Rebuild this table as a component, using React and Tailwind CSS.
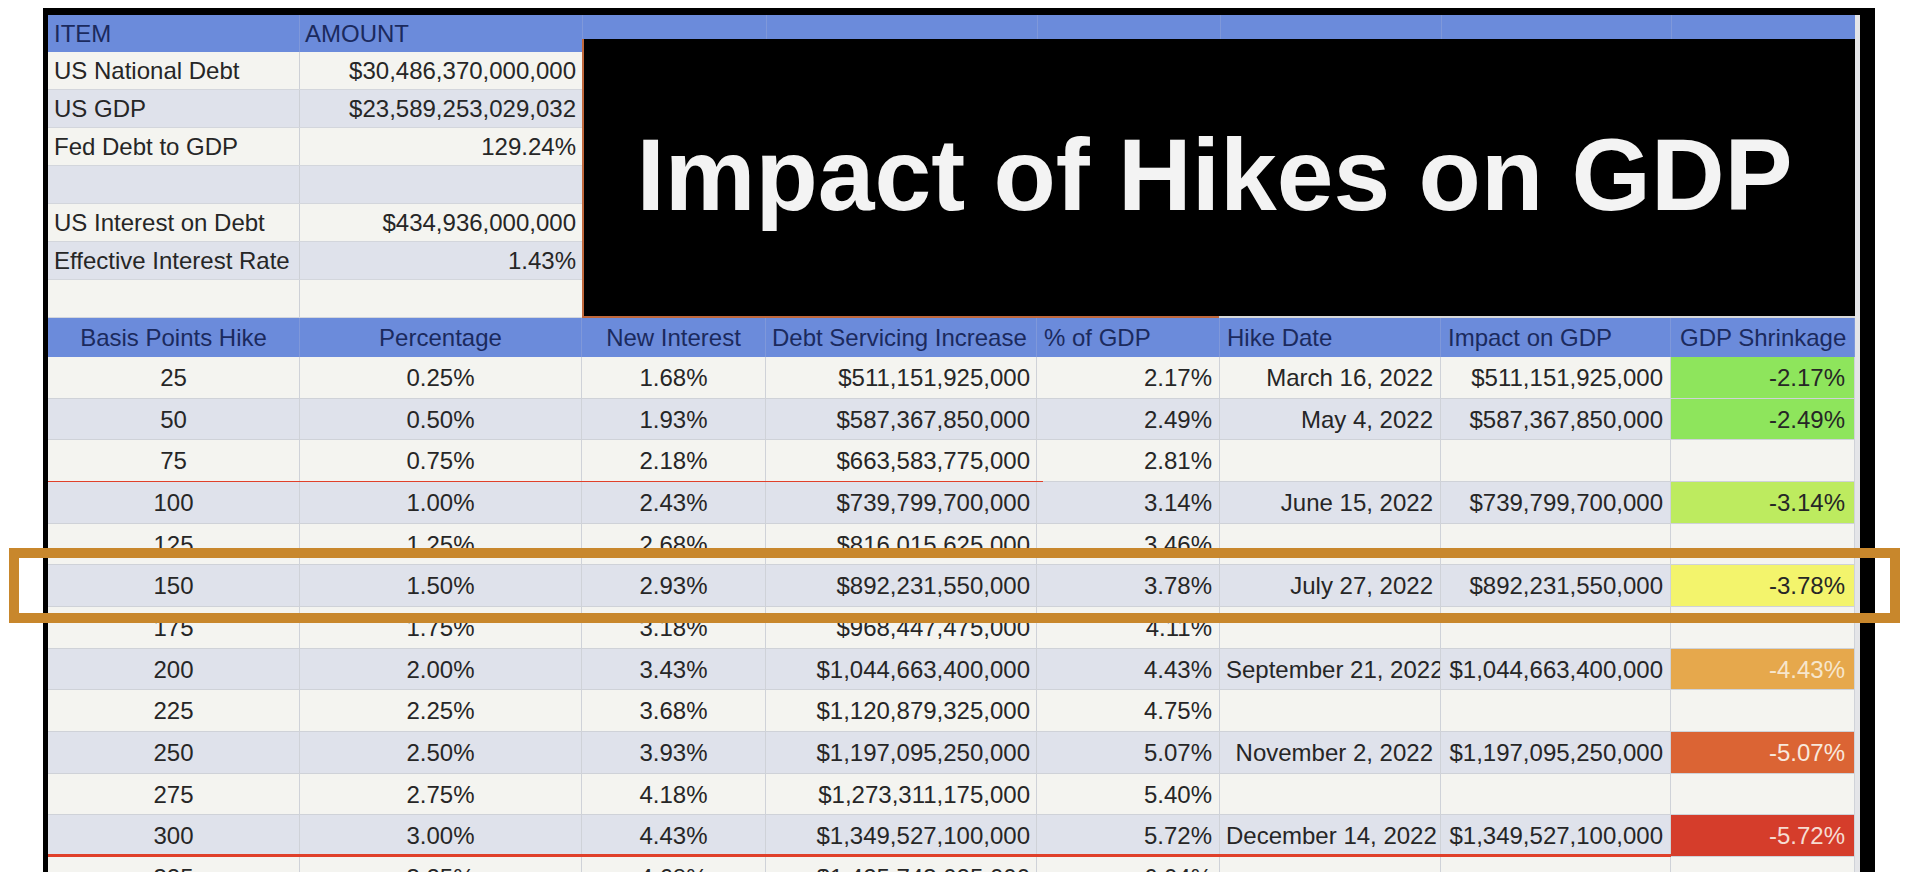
import React from 'react';

const COLS = [252, 282, 184, 271, 183, 221, 230, 184];

const ITEMS = [
  ['US National Debt', '$30,486,370,000,000'],
  ['US GDP', '$23,589,253,029,032'],
  ['Fed Debt to GDP', '129.24%'],
  ['', ''],
  ['US Interest on Debt', '$434,936,000,000'],
  ['Effective Interest Rate', '1.43%'],
  ['', ''],
];

// shrink cell colours, written out so tailwind picks them up
const SHRINK = {
  '-2.17%': 'bg-[#8ee55c] text-[#262626]',
  '-2.49%': 'bg-[#8ee55c] text-[#262626]',
  '-3.14%': 'bg-[#bdeb5f] text-[#262626]',
  '-3.78%': 'bg-[#f3f46c] text-[#262626]',
  '-4.43%': 'bg-[#e6a84c] text-[#f7e6cc]',
  '-5.07%': 'bg-[#db6434] text-[#f8e8dc]',
  '-5.72%': 'bg-[#d53d2b] text-[#f6dcd2]',
};

const ROWS = [
  ['25', '0.25%', '1.68%', '$511,151,925,000', '2.17%', 'March 16, 2022', '$511,151,925,000', '-2.17%'],
  ['50', '0.50%', '1.93%', '$587,367,850,000', '2.49%', 'May 4, 2022', '$587,367,850,000', '-2.49%'],
  ['75', '0.75%', '2.18%', '$663,583,775,000', '2.81%', '', '', ''],
  ['100', '1.00%', '2.43%', '$739,799,700,000', '3.14%', 'June 15, 2022', '$739,799,700,000', '-3.14%'],
  ['125', '1.25%', '2.68%', '$816,015,625,000', '3.46%', '', '', ''],
  ['150', '1.50%', '2.93%', '$892,231,550,000', '3.78%', 'July 27, 2022', '$892,231,550,000', '-3.78%'],
  ['175', '1.75%', '3.18%', '$968,447,475,000', '4.11%', '', '', ''],
  ['200', '2.00%', '3.43%', '$1,044,663,400,000', '4.43%', 'September 21, 2022', '$1,044,663,400,000', '-4.43%'],
  ['225', '2.25%', '3.68%', '$1,120,879,325,000', '4.75%', '', '', ''],
  ['250', '2.50%', '3.93%', '$1,197,095,250,000', '5.07%', 'November 2, 2022', '$1,197,095,250,000', '-5.07%'],
  ['275', '2.75%', '4.18%', '$1,273,311,175,000', '5.40%', '', '', ''],
  ['300', '3.00%', '4.43%', '$1,349,527,100,000', '5.72%', 'December 14, 2022', '$1,349,527,100,000', '-5.72%'],
  ['325', '3.25%', '4.68%', '$1,425,743,025,000', '6.04%', '', '', ''],
];

const HEADERS = [
  ['Basis Points Hike', 'justify-center'],
  ['Percentage', 'justify-center'],
  ['New Interest', 'justify-center'],
  ['Debt Servicing Increase', 'justify-start pl-[6px]'],
  ['% of GDP', 'justify-start pl-[7px]'],
  ['Hike Date', 'justify-start pl-[7px]'],
  ['Impact on GDP', 'justify-start pl-[7px]'],
  ['GDP Shrinkage', 'justify-start pl-[9px]'],
];

const ALIGN = [
  'text-center',
  'text-center',
  'text-center',
  'text-right pr-[6px]',
  'text-right pr-[7px]',
  'text-right pl-[6px] pr-[7px]',
  'text-right pr-[7px]',
  'text-right pr-[9px]',
];

const grid = 'grid grid-cols-[252px_282px_184px_271px_183px_221px_230px_184px]';

function SummaryTable() {
  return (
    <div className="w-[534px] shrink-0">
      <div className="flex h-[37px] bg-[#6b8bdb] text-[#1b2a5e]">
        <div className="w-[252px] flex items-center pl-[6px] border-r border-[#7f98da]">ITEM</div>
        <div className="w-[282px] flex items-center pl-[5px]">AMOUNT</div>
      </div>
      {ITEMS.map(([label, value], i) => (
        <div
          key={i}
          className={`flex h-[38px] border-b border-[#d3d6dc] ${i % 2 ? 'bg-[#dfe2eb]' : 'bg-[#f4f4f0]'}`}
        >
          <div className="w-[252px] flex items-center pl-[6px] border-r border-[#cdd0d6] whitespace-nowrap">{label}</div>
          <div className="w-[282px] flex items-center justify-end pr-[6px]">{value}</div>
        </div>
      ))}
    </div>
  );
}

function TitleBlock() {
  return (
    <div className="w-[1273px] shrink-0 flex flex-col">
      <div className="flex h-[24px] shrink-0 bg-[#6b8bdb]">
        {COLS.slice(2).map((w, i) => (
          <div key={i} style={{ width: w }} className="border-l border-[#7f98da]" />
        ))}
      </div>
      <div className="h-[279px] shrink-0 bg-black border-l-2 border-[#c0683c] flex flex-col">
        <div className="flex-1 flex items-center justify-center pb-[5px] pr-[10px]">
          <span className="text-[102px] font-bold leading-none text-[#f3f3f3] whitespace-nowrap">
            Impact of Hikes on GDP
          </span>
        </div>
        <div className="flex h-[2px]">
          <div className="w-[635px] bg-[#c0683c]" />
          <div className="flex-1 bg-[#d8d8d8]" />
        </div>
      </div>
    </div>
  );
}

function HikeRow({ row, index }) {
  const shrink = row[7];
  return (
    <div className={`relative ${grid} h-[41.67px] ${index % 2 ? 'bg-[#dfe2eb]' : 'bg-[#f4f4f0]'}`}>
      {row.map((cell, c) => (
        <div
          key={c}
          className={`overflow-hidden whitespace-nowrap border-r border-b border-[#cfd2d8] leading-[41px] ${ALIGN[c]} ${
            c === 7 && shrink ? SHRINK[shrink] : ''
          }`}
        >
          {cell}
        </div>
      ))}
      {row[0] === '75' && <div className="absolute left-0 bottom-[-2px] h-[3px] w-[995px] bg-[#e0402a]" />}
      {row[0] === '300' && <div className="absolute left-0 bottom-[0px] h-[3px] w-[1623px] bg-[#e0402a]" />}
    </div>
  );
}

export default function App() {
  return (
    <div className="relative w-[1913px] h-[882px] bg-white overflow-hidden font-['Liberation_Sans',Arial,sans-serif] text-[24px] text-[#262626]">
      <div className="ml-[43px] mt-[8px] w-[1832px] h-[864px] bg-black pl-[5px] pt-[7px] overflow-hidden flex items-start">
        <div className="w-[1807px] shrink-0">
          <div className="flex">
            <SummaryTable />
            <TitleBlock />
          </div>

          <div className={`${grid} h-[39px] bg-[#6b8bdb] text-[#1b2a5e]`}>
            {HEADERS.map(([label, cls], i) => (
              <div key={i} className={`flex items-center whitespace-nowrap border-r border-[#7f98da] ${cls}`}>
                {label}
              </div>
            ))}
          </div>

          {ROWS.map((row, i) => (
            <HikeRow key={row[0]} row={row} index={i} />
          ))}
        </div>
        <div className="w-[5px] h-full shrink-0 bg-[#e4e5e8]" />
      </div>

      {/* highlight box drawn over the 150 bp row */}
      <div className="absolute left-[9px] top-[548px] w-[1891px] h-[75px] border-[10px] border-[#c8872c] pointer-events-none" />
    </div>
  );
}
